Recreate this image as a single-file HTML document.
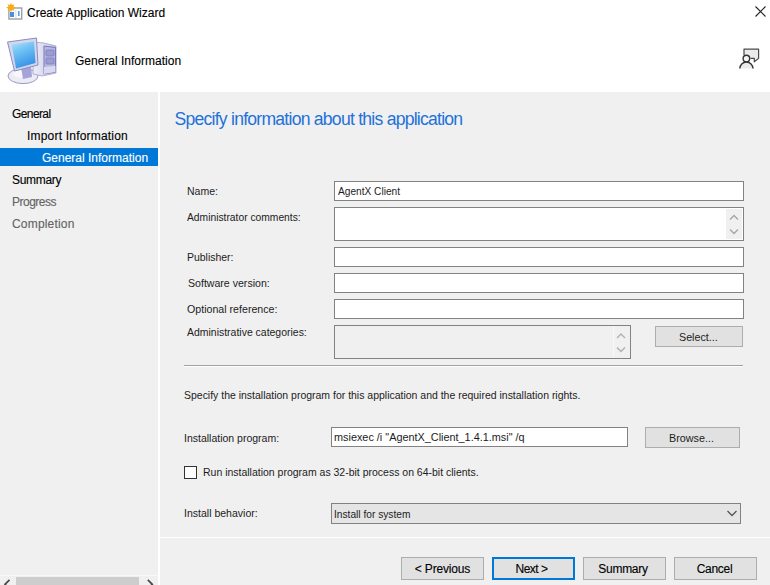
<!DOCTYPE html>
<html><head><meta charset="utf-8">
<style>
html,body{margin:0;padding:0;}
body{width:770px;height:585px;overflow:hidden;position:relative;background:#f0f0f0;font-family:"Liberation Sans",sans-serif;color:#000;}
.a{position:absolute;white-space:nowrap;line-height:1;}
.s12{font-size:12px;-webkit-text-stroke:0.12px currentColor;}
.lb{font-size:11.6px;transform-origin:0 0;color:#1c1c1c;}
.hdr{position:absolute;left:0;top:0;width:770px;height:92px;background:#fff;}
.vsep{position:absolute;left:158px;top:92px;width:2px;height:493px;background:#fff;}
.hsep{position:absolute;left:160px;top:537px;width:610px;height:1px;background:#fff;}
.sel{position:absolute;left:0;top:148px;width:158px;height:18px;background:#0078d7;}
.tb{position:absolute;box-sizing:border-box;border:1px solid #828282;background:#fff;}
.btn{position:absolute;box-sizing:border-box;border:1px solid #adadad;background:#e1e1e1;font-size:12px;text-align:center;line-height:1;}
.gray{color:#636363;}
</style></head><body>
<div class="hdr"></div>
<!-- title icon -->
<svg class="a" style="left:0;top:0" width="24" height="24" viewBox="0 0 24 24">
  <rect x="8.9" y="8" width="12.8" height="11" fill="#fff" stroke="#a0a0a0" stroke-width="1.4"/>
  <rect x="10" y="12" width="4" height="5" fill="#4a8ee0"/>
  <rect x="15" y="10" width="1.6" height="8" fill="#e4e8f0"/>
  <rect x="18" y="11" width="1.6" height="5" fill="#5aa0ea"/>
  <polygon points="11.00,2.70 12.03,5.11 14.46,4.14 13.49,6.57 15.90,7.60 13.49,8.63 14.46,11.06 12.03,10.09 11.00,12.50 9.97,10.09 7.54,11.06 8.51,8.63 6.10,7.60 8.51,6.57 7.54,4.14 9.97,5.11" fill="#f7ac1c"/>
</svg>
<div class="a s12" style="left:27px;top:6.5px;">Create Application Wizard</div>
<!-- close X -->
<svg class="a" style="left:754px;top:5px" width="13" height="13" viewBox="0 0 13 13"><path d="M1.5 1.5L11.5 11.5M11.5 1.5L1.5 11.5" stroke="#222" stroke-width="1.1"/></svg>

<!-- computer icon -->
<svg class="a" style="left:0;top:30px" width="64" height="60" viewBox="0 0 64 60">
  <defs>
    <linearGradient id="scr" x1="0" y1="0" x2="0.4" y2="1">
      <stop offset="0" stop-color="#b4e2fb"/>
      <stop offset="0.45" stop-color="#6cc0f4"/>
      <stop offset="1" stop-color="#3a94e6"/>
    </linearGradient>
    <linearGradient id="twr" x1="0" y1="0" x2="1" y2="0">
      <stop offset="0" stop-color="#eeeef8"/>
      <stop offset="1" stop-color="#c4c4e6"/>
    </linearGradient>
  </defs>
  <ellipse cx="23" cy="46" rx="15" ry="7.6" fill="#ececf4" stroke="#9a9ac4" stroke-width="1"/>
  <ellipse cx="21" cy="44" rx="8" ry="3.5" fill="#f8f8fc"/>
  <polygon points="21,37 31,35 32,47 23,49" fill="#a4a4da"/>
  <polygon points="33,12 44,13 56,16 56,43 42,46 33,44" fill="url(#twr)" stroke="#a0a0cc" stroke-width="0.8"/>
  <polygon points="44,16 55.5,17.5 55.5,42 44,44" fill="#b8b8e2" stroke="#7878b8" stroke-width="1"/>
  <rect x="46" y="20" width="8" height="6" rx="1" fill="#9c9cd4" stroke="#7070b0" stroke-width="0.6"/>
  <rect x="46" y="28" width="8" height="6" rx="1" fill="#9c9cd4" stroke="#7070b0" stroke-width="0.6"/>
  <polygon points="44,37 55.5,36 55.5,42 44,44" fill="#d8d8ee"/>
  <polygon points="7.5,12 36.5,8 38,35 14.5,41" fill="#d4d6ee" stroke="#8c8cbc" stroke-width="1"/>
  <polygon points="11.5,14.5 34,11.5 35.5,33 16,38.5" fill="url(#scr)"/>
</svg>
<div class="a s12" style="left:75px;top:55px;">General Information</div>
<!-- feedback icon -->
<svg class="a" style="left:736px;top:46.4px" width="26" height="26" viewBox="0 0 26 26">
  <path d="M8 9V3.2H22.6V12.4L18.3 15.8V12.3H14.6" fill="#ebebeb" stroke="#4a4a4a" stroke-width="1.2" stroke-linejoin="round"/>
  <circle cx="10.4" cy="12.6" r="3.3" fill="#f4f4f4" stroke="#333" stroke-width="1.4"/>
  <path d="M3.8 22.6a6.6 6.6 0 0 1 13.2 0" fill="#ebebeb" stroke="#333" stroke-width="1.4"/>
</svg>

<!-- sidebar -->
<div class="sel"></div>
<div class="a s12" style="left:12px;top:108px;letter-spacing:-0.6px;">General</div>
<div class="a s12" style="left:27px;top:130px;letter-spacing:0.2px;">Import Information</div>
<div class="a s12" style="left:42px;top:152px;color:#fff;">General Information</div>
<div class="a s12" style="left:12px;top:174px;letter-spacing:-0.3px;">Summary</div>
<div class="a s12 gray" style="left:12px;top:196px;letter-spacing:-0.5px;">Progress</div>
<div class="a s12 gray" style="left:12px;top:218px;letter-spacing:0.18px;">Completion</div>
<div class="vsep"></div>
<div class="hsep"></div>

<!-- heading -->
<div class="a" style="left:174.5px;top:111px;font-size:17.6px;color:#1f72d9;letter-spacing:-0.76px;">Specify information about this application</div>

<!-- labels -->

<div class="tb" style="left:334px;top:181px;width:410px;height:20px;"></div>
<div class="tb" style="left:334px;top:207px;width:410px;height:34px;"></div>
<div class="tb" style="left:334px;top:247px;width:410px;height:20px;"></div>
<div class="tb" style="left:334px;top:273px;width:410px;height:20px;"></div>
<div class="tb" style="left:334px;top:299px;width:410px;height:20px;"></div>
<div class="tb" style="left:334px;top:325px;width:297px;height:34px;background:#f0f0f0;"></div>
<div class="btn" style="left:655px;top:326px;width:88px;height:21px;"></div>

<div class="a" style="left:184px;top:365px;width:559px;height:1px;background:#a0a0a0;"></div>
<div class="a" style="left:184px;top:366px;width:559px;height:1px;background:#fff;"></div>

<div class="tb" style="left:331px;top:427px;width:297px;height:20px;"></div>
<div class="btn" style="left:645px;top:427px;width:95px;height:21px;"></div>

<div class="a" style="left:184px;top:466px;width:13px;height:13px;box-sizing:border-box;border:1px solid #333;background:#fff;"></div>

<div class="tb" style="left:331px;top:503px;width:410px;height:21px;background:#e5e5e5;"></div>

<!-- buttons -->
<div class="btn" style="left:401px;top:557px;width:83px;height:23px;"></div>
<div class="btn" style="left:492px;top:557px;width:83px;height:23px;border:2px solid #0078d7;"></div>
<div class="btn" style="left:583px;top:557px;width:83px;height:23px;"></div>
<div class="btn" style="left:674px;top:557px;width:83px;height:23px;"></div>

<!-- button labels -->
<div class="a s12" style="left:401px;top:562.5px;width:83px;text-align:center;letter-spacing:-0.17px;">&lt; Previous</div>
<div class="a s12" style="left:490px;top:562.5px;width:83px;text-align:center;letter-spacing:-0.5px;">Next &gt;</div>
<div class="a s12" style="left:581.5px;top:562.5px;width:83px;text-align:center;letter-spacing:-0.27px;">Summary</div>
<div class="a s12" style="left:673px;top:562.5px;width:83px;text-align:center;letter-spacing:-0.3px;">Cancel</div>

<!-- comments scrollbar -->
<div class="a" style="left:726px;top:209px;width:16px;height:30px;background:#f0f0f0;"></div>
<svg class="a" style="left:726px;top:209px" width="16" height="30" viewBox="0 0 16 30"><path d="M4 10.5L8 6.5L12 10.5M4 20.5L8 24.5L12 20.5" fill="none" stroke="#a6a6a6" stroke-width="1.4"/></svg>
<!-- categories scrollbar -->
<div class="a" style="left:613px;top:326px;width:1px;height:32px;background:#f8f8f8;"></div>
<svg class="a" style="left:613px;top:326px" width="17" height="32" viewBox="0 0 17 32"><path d="M4 12L8 8L12 12M4 21.5L8 25.5L12 21.5" fill="none" stroke="#b0b0b0" stroke-width="1.4"/></svg>
<!-- combo chevron -->
<svg class="a" style="left:725px;top:507px" width="14" height="12" viewBox="0 0 14 12"><path d="M2.5 4L7 8.5L11.5 4" fill="none" stroke="#555" stroke-width="1.3"/></svg>

<!-- sidebar scrollbar -->
<div class="a" style="left:0;top:575px;width:158px;height:1px;background:#f8f8f8;"></div>
<div class="a" style="left:16px;top:577px;width:123px;height:8px;background:#cdcdcd;"></div>
<svg class="a" style="left:0;top:576px" width="158" height="9" viewBox="0 0 158 9"><path d="M9.5 3.8L5 8.3L9.5 12.8M147.8 3.8L152.3 8.3L147.8 12.8" fill="none" stroke="#4a4a4a" stroke-width="1.7"/></svg>
<!-- labels (fit) -->
<div class="a lb" style="left:186.69px;top:184.70px;transform:scaleX(0.9061);">Name:</div>
<div class="a lb" style="left:187.00px;top:210.90px;transform:scaleX(0.8867);">Administrator comments:</div>
<div class="a lb" style="left:186.60px;top:251.20px;transform:scaleX(0.9020);">Publisher:</div>
<div class="a lb" style="left:187.50px;top:276.80px;transform:scaleX(0.9124);">Software version:</div>
<div class="a lb" style="left:186.90px;top:302.50px;transform:scaleX(0.9173);">Optional reference:</div>
<div class="a lb" style="left:187.30px;top:325.90px;transform:scaleX(0.9023);">Administrative categories:</div>
<div class="a lb" style="left:337.70px;top:184.90px;transform:scaleX(0.8746);">AgentX Client</div>
<div class="a lb" style="left:679.00px;top:331.00px;transform:scaleX(0.9244);">Select...</div>
<div class="a lb" style="left:184.40px;top:389.00px;transform:scaleX(0.9032);">Specify the installation program for this application and the required installation rights.</div>
<div class="a lb" style="left:183.50px;top:431.80px;transform:scaleX(0.9049);">Installation program:</div>
<div class="a lb" style="left:333.60px;top:430.80px;transform:scaleX(0.9365);">msiexec /i "AgentX_Client_1.4.1.msi" /q</div>
<div class="a lb" style="left:668.77px;top:431.80px;transform:scaleX(0.9298);">Browse...</div>
<div class="a lb" style="left:203.10px;top:466.00px;transform:scaleX(0.9043);">Run installation program as 32-bit process on 64-bit clients.</div>
<div class="a lb" style="left:183.89px;top:507.00px;transform:scaleX(0.9075);">Install behavior:</div>
<div class="a lb" style="left:334.42px;top:507.70px;transform:scaleX(0.8791);">Install for system</div>
</body></html>
